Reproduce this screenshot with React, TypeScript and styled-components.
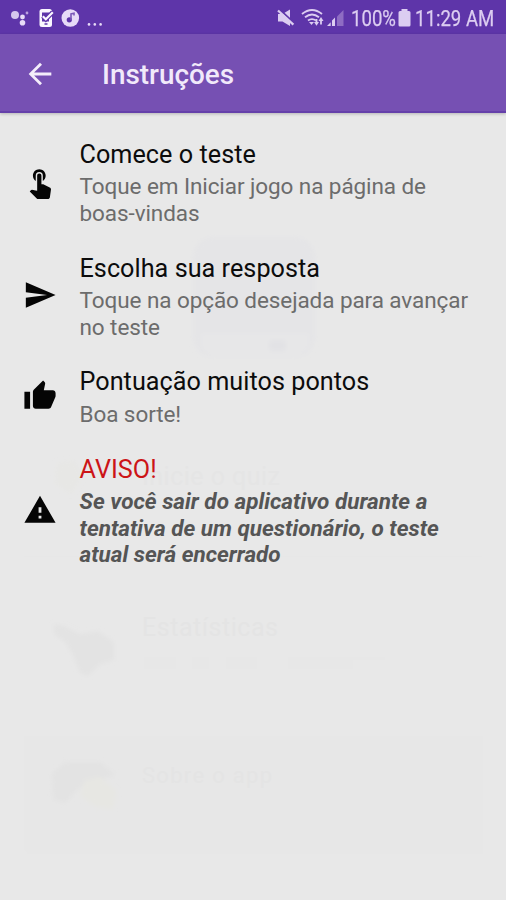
import React from "react";
import styled, { createGlobalStyle } from "styled-components";
import { MdArrowBack, MdSend, MdThumbUp, MdTouchApp, MdWarning } from "react-icons/md";

const GlobalStyle = createGlobalStyle`
  * { box-sizing: border-box; }
  body { margin: 0; background: #e8e8e8; font-family: Roboto, "Liberation Sans", sans-serif; }
`;

const Screen = styled.div`
  position: relative;
  display: flex;
  flex-direction: column;
  width: 506px;
  height: 900px;
  overflow: hidden;
  background: #e8e8e8;
`;

const StatusBar = styled.div`
  display: flex;
  align-items: center;
  justify-content: space-between;
  height: 34px;
  flex: none;
  background: #5e35a9;
`;

const StatusIcons = styled.svg`
  display: block;
  flex: none;
  height: 34px;
`;

const StatusGroup = styled.div`
  display: flex;
  align-items: center;
  padding-right: 10px;
`;

const StatusText = styled.span<{ $width: number }>`
  display: block;
  width: ${(p) => p.$width}px;
  padding-top: 3px;
  font-size: 22px;
  line-height: 31px;
  color: #dccdf1;
  -webkit-text-stroke: 0.25px #dccdf1;
  white-space: nowrap;

  & > span {
    display: inline-block;
    transform: scaleX(0.845);
    transform-origin: left center;
  }
`;

const Toolbar = styled.header`
  display: flex;
  align-items: center;
  height: 79px;
  flex: none;
  padding: 2px 0 0 23px;
  background: #7650b3;
  border-bottom: 2px solid #6540aa;
  box-shadow: 0 1px 3px rgba(0, 0, 0, 0.22);
  z-index: 1;
`;

const BackButton = styled.button`
  display: flex;
  padding: 0;
  border: 0;
  background: none;
  color: #f4edfb;
`;

const ToolbarTitle = styled.h1`
  margin: 2px 0 0 45px;
  font-size: 27.9px;
  font-weight: 500;
  line-height: 34px;
  color: #f1e9fa;
`;

const Steps = styled.main`
  display: flex;
  flex-direction: column;
  gap: 27.2px;
  padding: 26.7px 0 0 23px;
  z-index: 1;
`;

const Step = styled.section`
  display: flex;
  align-items: center;
`;

const StepIcon = styled.div`
  display: flex;
  width: 56.5px;
  padding-bottom: 3px;
  color: #050505;
`;

const StepTitle = styled.h2<{ $warning?: boolean }>`
  margin: 0 0 3.4px;
  font-size: 25.2px;
  font-weight: 400;
  line-height: 30px;
  letter-spacing: 0.04px;
  color: ${(p) => (p.$warning ? "#cc1417" : "#0c0c0c")};
  white-space: nowrap;
`;

const StepBody = styled.p<{ $strong?: boolean }>`
  margin: 0;
  font-size: 22.5px;
  font-weight: ${(p) => (p.$strong ? 700 : 400)};
  font-style: ${(p) => (p.$strong ? "italic" : "normal")};
  line-height: 26.65px;
  letter-spacing: ${(p) => (p.$strong ? "0" : "-0.08px")};
  color: ${(p) => (p.$strong ? "#555" : "#6c6c6c")};
  white-space: pre-line;
`;

const Backdrop = styled.svg`
  position: absolute;
  inset: 0;
  font-family: Roboto, sans-serif;
`;

const steps = [
  { icon: MdTouchApp, title: "Comece o teste", body: "Toque em Iniciar jogo na página de\nboas-vindas" },
  { icon: MdSend, title: "Escolha sua resposta", body: "Toque na opção desejada para avançar\nno teste" },
  { icon: MdThumbUp, title: "Pontuação muitos pontos", body: "Boa sorte!" },
  {
    icon: MdWarning,
    title: "AVISO!",
    body: "Se você sair do aplicativo durante a\ntentativa de um questionário, o teste\natual será encerrado",
    warning: true,
  },
];

function FadingHome() {
  return (
    <Backdrop width="506" height="900" viewBox="0 0 506 900" aria-hidden="true">
      <defs>
        <filter id="soften"><feGaussianBlur stdDeviation="2" /></filter>
      </defs>
      <path d="M24 556h458v1H24zM24 736h459v118H28l-4-5z" fill="#e7e7e7" />
      <g filter="url(#soften)">
        <rect x="193" y="237" width="122" height="120" rx="20" fill="#e5e5e7" />
        <path d="M202 334h106v8a14 14 0 0 1-14 14h-78a14 14 0 0 1-14-14z" fill="#e7e7e8" />
        <rect x="269" y="340" width="17" height="11" rx="3" fill="#e2e2e5" />
        <path d="M57 463l18-3 8 16-12 18-16-10z" fill="#e7e7e5" />
        <path d="M54 624l10 2 16 8 18-3 16 11v18l-14 4-12 12-8-3-7-18-8-13-11-8z" fill="#e3e3e3" />
        <path d="M52 773l14-11 35 0 15 13-16 5-12 1-14 12-8 10-13-3z" fill="#e3e3e3" />
        <path d="M84 781l17-4 16 15-4 17-18-2-15-11z" fill="#e7e7e3" />
      </g>
      <path d="M144 657h32v12h-32zm48 0h17v12h-17zm34 0h31v12h-31zm62 0h65v12h-65zm65 0h32v3h-32z" fill="#e7e7e7" />
      <g fill="#e4e4e4" fontSize="25">
        <text x="142" y="485" textLength="138" fill="#e5e5e5">Inicie o quiz</text>
        <text x="142" y="636" textLength="136">Estatísticas</text>
        <text x="142" y="783" textLength="130" fontSize="22">Sobre o app</text>
      </g>
    </Backdrop>
  );
}

function NotificationIcons() {
  return (
    <StatusIcons width="110" height="34" viewBox="0 0 110 34" fill="#e7dbf7">
      <circle cx="15" cy="15" r="4" fill="#d6c6ed" />
      <circle cx="22.5" cy="17" r="2.4" />
      <circle cx="22.5" cy="22.8" r="2.8" />
      <circle cx="27" cy="13" r="1.4" fill="#b9a1dd" />
      <rect x="39.5" y="9" width="12.5" height="18" rx="2.5" fill="#faf7ff" />
      <path d="M42 12.5h7v9h-7z" fill="#5e35a9" />
      <path d="M42.8 16.2l3 3 7-7" fill="none" stroke="#5e35a9" strokeWidth="4.5" />
      <path d="M42.8 16.2l3 3 7-7" fill="none" stroke="#faf7ff" strokeWidth="2.2" />
      <path d="M44.5 24h3" stroke="#5e35a9" strokeWidth="1.5" />
      <circle cx="70.3" cy="18" r="8.8" />
      <circle cx="69.3" cy="19.8" r="2.6" fill="#5e35a9" />
      <path d="M71 20v-6l3-.7v2.2" fill="none" stroke="#7b58b8" strokeWidth="1.6" />
      <circle cx="89" cy="24.4" r="1.3" />
      <circle cx="94.8" cy="24.4" r="1.3" />
      <circle cx="100.6" cy="24.4" r="1.3" />
    </StatusIcons>
  );
}

function SignalIcons() {
  return (
    <StatusIcons width="74" height="34" viewBox="277 0 74 34" fill="#dccdf1">
      <path d="M278 14h4.500l7.500-4.500v16.500l-7.500-4.500h-4.500z" />
      <path d="M278.5 8.5l15 14" stroke="#5e35a9" strokeWidth="2" />
      <path d="M278 10.5l15.4 14.2" stroke="#dccdf1" strokeWidth="2.3" />
      <g fill="none" stroke="#dccdf1" strokeWidth="1.9">
        <path d="M302 14q10-8 20 0" />
        <path d="M305 17.3q7-5.5 14 0" />
        <path d="M308 20.6q4-3 8 0" />
      </g>
      <path d="M309 22h5l-2.5 3z" />
      <path d="M314 22h1.6v-3h1.8v3h1.6l-2.5 3.8zM318.5 21l2.5-4 2.5 4h-1.6v3.5h-1.8V21z" />
      <path d="M327 26l3.7-3.7V26zM332 26v-5.5l3-3V26z" />
      <path d="M337 26v-9.5l6.5-6.5v16z" fill="#8e6cc3" />
    </StatusIcons>
  );
}

function Battery() {
  return (
    <StatusIcons width="18" height="34" viewBox="396.5 0 18 34" fill="#dccdf1">
      <path d="M401 9h6v2h1.5a1.500 1.500 0 0 1 1.500 1.500v12.500a1.500 1.500 0 0 1-1.500 1.500h-9a1.500 1.500 0 0 1-1.500-1.500V12.500a1.500 1.500 0 0 1 1.500-1.500h1.500z" />
    </StatusIcons>
  );
}

export default function App() {
  return (
    <>
      <GlobalStyle />
      <Screen>
        <FadingHome />
        <StatusBar>
          <NotificationIcons />
          <StatusGroup>
            <SignalIcons />
            <StatusText $width={46}><span>100%</span></StatusText>
            <Battery />
            <StatusText $width={81}><span>11:29 AM</span></StatusText>
          </StatusGroup>
        </StatusBar>
        <Toolbar>
          <BackButton aria-label="Voltar"><MdArrowBack size={34} /></BackButton>
          <ToolbarTitle>Instruções</ToolbarTitle>
        </Toolbar>
        <Steps>
          {steps.map(({ icon: Icon, title, body, warning }) => (
            <Step key={title}>
              <StepIcon><Icon size={34} /></StepIcon>
              <div>
                <StepTitle $warning={warning}>{title}</StepTitle>
                <StepBody $strong={warning}>{body}</StepBody>
              </div>
            </Step>
          ))}
        </Steps>
      </Screen>
    </>
  );
}
